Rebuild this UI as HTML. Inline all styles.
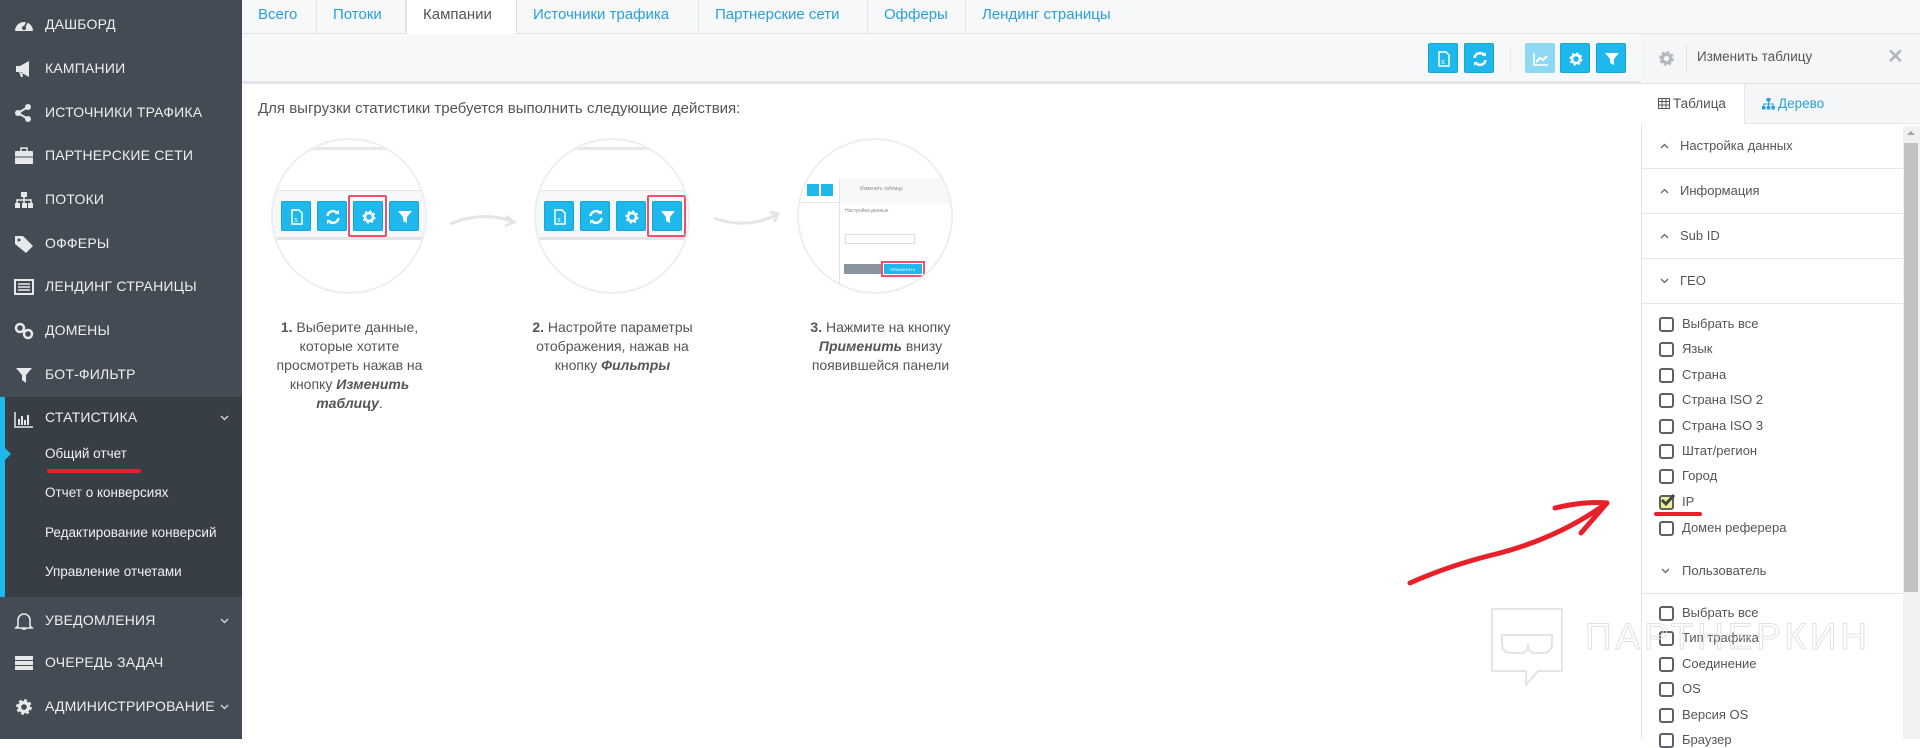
<!DOCTYPE html>
<html><head><meta charset="utf-8">
<style>
*{box-sizing:border-box;margin:0;padding:0}
body{width:1920px;height:739px;overflow:hidden;font-family:"Liberation Sans",sans-serif;background:#fff;position:relative;color:#555}
.abs{position:absolute}
#sb{left:0;top:0;width:242px;height:739px;background:#434b54}
.si{position:absolute;left:45px;color:#eef0f2;font-size:14px;text-transform:uppercase;letter-spacing:.2px}
.ic{position:absolute;left:14px;width:20px;height:18px}
.sub{position:absolute;left:45px;color:#f0f2f4;font-size:13.5px}
.chev{position:absolute;left:220px;width:9px;height:6px}
.tab{position:absolute;top:0;height:34px;line-height:30px;font-size:15px;color:#2b9fd8;padding:0 16px;border-right:1px solid #dfe2e6}
.btn{position:absolute;width:30px;height:30px;background:#1fb8ec;border-radius:2px;border:1px solid #14a6d8}
.btn svg{position:absolute;left:7px;top:7px;width:16px;height:16px}
.cb{position:absolute;left:1659px;width:15px;height:15px;border:2px solid #5b6168;border-radius:3px;background:#fff}
.cl{position:absolute;left:1682px;font-size:13px;color:#555}
.acc{position:absolute;left:1641px;width:262px;height:45px;border-bottom:1px solid #e3e5e8}
.acc span{position:absolute;left:39px;top:14px;font-size:13px;color:#555}
.acc svg{position:absolute;left:19px;top:19px}
.circ{position:absolute;width:156px;height:156px;border-radius:50%;border:2px solid #eceef0;background:#fff;overflow:hidden}
.step{position:absolute;font-size:14px;line-height:19px;color:#555;text-align:center}
</style></head><body>
<svg width="0" height="0" style="position:absolute">
<defs>
<symbol id="xls" viewBox="0 0 16 16"><path d="M3 1h7l3 3v11H3z" fill="none" stroke="#fff" stroke-width="1.5"/><text x="5" y="13" font-size="8" fill="#fff" font-family="Liberation Serif">x</text></symbol>
<symbol id="ref" viewBox="0 0 16 16"><path d="M2.5 7a5.5 5.5 0 0 1 10-2.5M13.5 9a5.5 5.5 0 0 1-10 2.5" fill="none" stroke="#fff" stroke-width="2.5"/><path d="M10 5h4V1zM6 11H2v4z" fill="#fff"/></symbol>
<symbol id="gear" viewBox="0 0 16 16"><circle cx="8" cy="8" r="5" fill="none" stroke="#fff" stroke-width="3" stroke-dasharray="2.2 1.7"/><circle cx="8" cy="8" r="4" fill="none" stroke="#fff" stroke-width="2.5"/></symbol>
<symbol id="fil" viewBox="0 0 16 16"><path d="M1 2h14L10 8v6l-4-2V8z" fill="#fff"/></symbol>
<symbol id="chart" viewBox="0 0 16 16"><path d="M1 2v12h14" fill="none" stroke="#fff" stroke-width="1.5"/><path d="M3 11l4-4 3 2 4-4" fill="none" stroke="#fff" stroke-width="2"/></symbol>
<symbol id="dn" viewBox="0 0 9 6"><path d="M1 1l3.5 3.5L8 1" fill="none" stroke="#cfd3d7" stroke-width="1.5"/></symbol>
<symbol id="up2" viewBox="0 0 9 6"><path d="M1 5l3.5-3.5L8 5" fill="none" stroke="#666" stroke-width="1.3"/></symbol>
<symbol id="dn2" viewBox="0 0 9 6"><path d="M1 1l3.5 3.5L8 1" fill="none" stroke="#666" stroke-width="1.3"/></symbol>
</defs></svg>

<!-- sidebar -->
<div id="sb" class="abs">
 <div class="abs" style="left:0;top:397px;width:242px;height:200px;background:#373e45"></div>
 <div class="abs" style="left:0;top:397px;width:5px;height:200px;background:#1fb8ec"></div>
 <div class="abs" style="left:5px;top:448px;width:0;height:0;border-top:6px solid transparent;border-bottom:6px solid transparent;border-left:6px solid #1fb8ec"></div>
 <svg class="ic" style="top:16px" viewBox="0 0 20 18"><path d="M1 15a9 9 0 1 1 18 0z" fill="#e6e8ea"/><circle cx="10" cy="12" r="2" fill="#434b54"/><path d="M10 12l3-6" stroke="#434b54" stroke-width="1.6"/></svg>
 <div class="si" style="top:16px">Дашборд</div>
 <svg class="ic" style="top:60px" viewBox="0 0 20 18"><path d="M2 6h4l9-5v16l-9-5H2z M5 12l2 5h2l-1-5" fill="#e6e8ea"/></svg>
 <div class="si" style="top:60px">Кампании</div>
 <svg class="ic" style="top:104px" viewBox="0 0 20 18"><circle cx="4" cy="9" r="3" fill="#e6e8ea"/><circle cx="14" cy="3" r="3" fill="#e6e8ea"/><circle cx="14" cy="15" r="3" fill="#e6e8ea"/><path d="M4 9l10-6M4 9l10 6" stroke="#e6e8ea" stroke-width="2"/></svg>
 <div class="si" style="top:104px">Источники трафика</div>
 <svg class="ic" style="top:147px" viewBox="0 0 20 18"><rect x="1" y="4" width="18" height="13" rx="1" fill="#e6e8ea"/><rect x="7" y="1" width="6" height="4" fill="none" stroke="#e6e8ea" stroke-width="1.5"/><path d="M1 10h18" stroke="#434b54"/></svg>
 <div class="si" style="top:147px">Партнерские сети</div>
 <svg class="ic" style="top:191px" viewBox="0 0 20 18"><rect x="7" y="1" width="6" height="5" fill="#e6e8ea"/><rect x="1" y="12" width="5" height="5" fill="#e6e8ea"/><rect x="8" y="12" width="5" height="5" fill="#e6e8ea"/><rect x="14" y="12" width="5" height="5" fill="#e6e8ea"/><path d="M10 6v6M3 12V9h14v3" fill="none" stroke="#e6e8ea" stroke-width="1.5"/></svg>
 <div class="si" style="top:191px">Потоки</div>
 <svg class="ic" style="top:235px" viewBox="0 0 20 18"><path d="M1 1h8l10 10-7 7L1 9z" fill="#e6e8ea"/><circle cx="5" cy="5" r="1.5" fill="#434b54"/></svg>
 <div class="si" style="top:235px">Офферы</div>
 <svg class="ic" style="top:278px" viewBox="0 0 20 18"><rect x="1" y="2" width="18" height="14" fill="none" stroke="#e6e8ea" stroke-width="2"/><path d="M4 6h12M4 9h12M4 12h12" stroke="#e6e8ea" stroke-width="1.5"/></svg>
 <div class="si" style="top:278px">Лендинг страницы</div>
 <svg class="ic" style="top:322px" viewBox="0 0 20 18"><circle cx="6" cy="6" r="4" fill="none" stroke="#e6e8ea" stroke-width="2.5"/><circle cx="14" cy="12" r="4" fill="none" stroke="#e6e8ea" stroke-width="2.5"/></svg>
 <div class="si" style="top:322px">Домены</div>
 <svg class="ic" style="top:366px" viewBox="0 0 20 18"><path d="M2 2h16l-6 7v8l-4-3V9z" fill="#e6e8ea"/></svg>
 <div class="si" style="top:366px">Бот-фильтр</div>
 <svg class="ic" style="top:410px" viewBox="0 0 20 18"><path d="M1 2v15h18" fill="none" stroke="#e6e8ea" stroke-width="1.5"/><path d="M5 9v6M8 6v9M11 10v5M14 5v10" stroke="#e6e8ea" stroke-width="2"/></svg>
 <div class="si" style="top:409px">Статистика</div><svg class="chev" style="top:415px"><use href="#dn"/></svg>
 <div class="sub" style="top:446px">Общий отчет</div>
 <div class="abs" style="left:47px;top:469px;width:94px;height:4px;background:#e8202a;border-radius:2px"></div>
 <div class="sub" style="top:485px">Отчет о конверсиях</div>
 <div class="sub" style="top:525px">Редактирование конверсий</div>
 <div class="sub" style="top:564px">Управление отчетами</div>
 <svg class="ic" style="top:612px" viewBox="0 0 20 18"><path d="M4 14V8a6 6 0 0 1 12 0v6l2 2H2z" fill="none" stroke="#e6e8ea" stroke-width="1.6"/><path d="M8 17h4" stroke="#e6e8ea" stroke-width="1.6"/></svg>
 <div class="si" style="top:612px">Уведомления</div><svg class="chev" style="top:618px"><use href="#dn"/></svg>
 <svg class="ic" style="top:654px" viewBox="0 0 20 18"><rect x="1" y="2" width="18" height="4" fill="#e6e8ea"/><rect x="1" y="7" width="18" height="4" fill="#e6e8ea"/><rect x="1" y="12" width="18" height="4" fill="#e6e8ea"/></svg>
 <div class="si" style="top:654px">Очередь задач</div>
 <svg class="ic" style="top:698px" viewBox="0 0 16 16"><circle cx="8" cy="8" r="5.5" fill="none" stroke="#e6e8ea" stroke-width="3" stroke-dasharray="2.4 1.9"/><circle cx="8" cy="8" r="4" fill="none" stroke="#e6e8ea" stroke-width="3"/></svg>
 <div class="si" style="top:698px">Администрирование</div><svg class="chev" style="top:704px"><use href="#dn"/></svg>
</div>

<!-- tabs -->
<div class="abs" style="left:242px;top:0;width:1678px;height:34px;background:#f7f8fa;border-bottom:1px solid #dfe2e6"></div>
<div class="tab" style="left:242px;width:75px">Всего</div>
<div class="tab" style="left:317px;width:89px">Потоки</div>
<div class="tab" style="left:406px;width:111px;background:#fff;color:#555;height:35px;border-left:1px solid #dfe2e6">Кампании</div>
<div class="tab" style="left:517px;width:182px">Источники трафика</div>
<div class="tab" style="left:699px;width:169px">Партнерские сети</div>
<div class="tab" style="left:868px;width:98px">Офферы</div>
<div class="tab" style="left:966px;border-right:none">Лендинг страницы</div>

<!-- toolbar -->
<div class="abs" style="left:242px;top:34px;width:1399px;height:50px;background:#f7f8fa;border-bottom:3px solid #e3e5e8"></div>
<div class="btn" style="left:1428px;top:43px"><svg><use href="#xls"/></svg></div>
<div class="btn" style="left:1464px;top:43px"><svg><use href="#ref"/></svg></div>
<div class="abs" style="left:1510px;top:46px;width:1px;height:26px;background:#e3e5e8"></div>
<div class="btn" style="left:1525px;top:43px;background:#8fd8f2;border-color:#8fd8f2"><svg><use href="#chart"/></svg></div>
<div class="btn" style="left:1560px;top:43px"><svg><use href="#gear"/></svg></div>
<div class="btn" style="left:1596px;top:43px"><svg><use href="#fil"/></svg></div>

<!-- content -->
<div class="abs" style="left:258px;top:100px;font-size:15px;color:#555">Для выгрузки статистики требуется выполнить следующие действия:</div>

<div class="circ" style="left:271px;top:138px">
 <div class="abs" style="left:0;top:7px;width:160px;height:3px;background:#e6e8ea"></div>
 <div class="abs" style="left:0;top:50px;width:160px;height:50px;background:#f7f8fa;border-top:1px solid #e3e5e8;border-bottom:3px solid #e3e5e8"></div>
 <div class="btn" style="left:8px;top:61px"><svg><use href="#xls"/></svg></div>
 <div class="btn" style="left:44px;top:61px"><svg><use href="#ref"/></svg></div>
 <div class="btn" style="left:80px;top:61px"><svg><use href="#gear"/></svg></div>
 <div class="abs" style="left:75px;top:55px;width:39px;height:42px;border:2px solid #f0506e;border-radius:2px"></div>
 <div class="btn" style="left:116px;top:61px"><svg><use href="#fil"/></svg></div>
</div>
<svg class="abs" style="left:448px;top:208px" width="72" height="22"><path d="M2 16Q35 2 66 14M58 8l8 6-9 4" fill="none" stroke="#e3e6e9" stroke-width="3"/></svg>
<div class="circ" style="left:534px;top:138px">
 <div class="abs" style="left:0;top:7px;width:160px;height:3px;background:#e6e8ea"></div>
 <div class="abs" style="left:0;top:50px;width:160px;height:50px;background:#f7f8fa;border-top:1px solid #e3e5e8;border-bottom:3px solid #e3e5e8"></div>
 <div class="btn" style="left:8px;top:61px"><svg><use href="#xls"/></svg></div>
 <div class="btn" style="left:44px;top:61px"><svg><use href="#ref"/></svg></div>
 <div class="btn" style="left:80px;top:61px"><svg><use href="#gear"/></svg></div>
 <div class="btn" style="left:116px;top:61px"><svg><use href="#fil"/></svg></div>
 <div class="abs" style="left:111px;top:55px;width:39px;height:42px;border:2px solid #f0506e;border-radius:2px"></div>
</div>
<svg class="abs" style="left:712px;top:208px" width="72" height="22"><path d="M2 10Q35 22 66 6M58 4l8 2-4 8" fill="none" stroke="#e3e6e9" stroke-width="3"/></svg>
<div class="circ" style="left:797px;top:138px">
 <div class="abs" style="left:8px;top:44px;width:12px;height:12px;background:#1fb8ec"></div>
 <div class="abs" style="left:22px;top:44px;width:12px;height:12px;background:#1fb8ec"></div>
 <div class="abs" style="left:0;top:62px;width:40px;height:1px;background:#e3e5e8"></div>
 <div class="abs" style="left:40px;top:38px;width:1px;height:120px;background:#e3e5e8"></div>
 <div class="abs" style="left:41px;top:38px;width:115px;height:26px;background:#f7f8fa;font-size:5px;color:#888;padding:8px 0 0 20px">Изменить таблицу</div>
 <div class="abs" style="left:46px;top:68px;font-size:5px;color:#888">Настройка данных</div>
 <div class="abs" style="left:46px;top:94px;width:70px;height:10px;border:1px solid #ddd"></div>
 <div class="abs" style="left:45px;top:124px;width:37px;height:10px;background:#8a949c"></div>
 <div class="abs" style="left:85px;top:124px;width:38px;height:10px;background:#1fb8ec;font-size:4px;color:#fff;padding:3px 0 0 6px">ПРИМЕНИТЬ</div>
 <div class="abs" style="left:82px;top:121px;width:44px;height:16px;border:2px solid #f0506e"></div>
</div>

<div class="step" style="left:262px;top:318px;width:175px"><b>1.</b> Выберите данные, которые хотите просмотреть нажав на кнопку <b><i>Изменить таблицу</i></b>.</div>
<div class="step" style="left:520px;top:318px;width:185px"><b>2.</b> Настройте параметры отображения, нажав на кнопку <b><i>Фильтры</i></b></div>
<div class="step" style="left:793px;top:318px;width:175px"><b>3.</b> Нажмите на кнопку <b><i>Применить</i></b> внизу появившейся панели</div>

<!-- right panel -->
<div class="abs" style="left:1641px;top:34px;width:279px;height:705px;background:#fff;border-left:1px solid #dfe2e6"></div>
<div class="abs" style="left:1641px;top:34px;width:279px;height:89px;background:#f5f6f8"></div>
<div class="abs" style="left:1641px;top:83px;width:279px;height:1px;background:#e3e5e8"></div>
<svg class="abs" style="left:1658px;top:50px" width="17" height="17" viewBox="0 0 16 16"><circle cx="8" cy="8" r="5.5" fill="none" stroke="#b5b9bd" stroke-width="3" stroke-dasharray="2.4 1.9"/><circle cx="8" cy="8" r="4" fill="none" stroke="#b5b9bd" stroke-width="3"/></svg>
<div class="abs" style="left:1686px;top:45px;width:1px;height:27px;background:#e0e2e5"></div>
<div class="abs" style="left:1697px;top:49px;font-size:13.5px;color:#555">Изменить таблицу</div>
<div class="abs" style="left:1887px;top:44px;font-size:20px;color:#b5b9bd;font-weight:bold">✕</div>
<div class="abs" style="left:1641px;top:84px;width:104px;height:40px;background:#fff;border-right:1px solid #e3e5e8"></div>
<div class="abs" style="left:1745px;top:123px;width:175px;height:1px;background:#e3e5e8"></div>
<svg class="abs" style="left:1658px;top:98px" width="12" height="11"><rect x=".5" y=".5" width="11" height="10" fill="none" stroke="#555"/><path d="M.5 3.5h11M.5 7h11M4 .5v10M8 .5v10" stroke="#555"/></svg>
<div class="abs" style="left:1673px;top:96px;font-size:13.5px;color:#555">Таблица</div>
<svg class="abs" style="left:1762px;top:98px" width="13" height="12"><rect x="4.5" y="0" width="4" height="3.5" fill="#2b9fd8"/><rect x="0" y="8" width="3.5" height="3.5" fill="#2b9fd8"/><rect x="4.7" y="8" width="3.5" height="3.5" fill="#2b9fd8"/><rect x="9.4" y="8" width="3.5" height="3.5" fill="#2b9fd8"/><path d="M6.5 3v5M1.7 8V6h9.5v2" fill="none" stroke="#2b9fd8"/></svg>
<div class="abs" style="left:1778px;top:96px;font-size:13.5px;color:#2b9fd8">Дерево</div>

<div class="abs" style="left:1903px;top:126px;width:17px;height:613px;background:#f1f1f1"></div>
<div class="abs" style="left:1904px;top:143px;width:14px;height:449px;background:#c1c1c1"></div>
<div class="abs" style="left:1907px;top:131px;width:0;height:0;border-left:4px solid transparent;border-right:4px solid transparent;border-bottom:4px solid #a3a3a3"></div>

<div class="acc" style="top:124px"><svg width="9" height="6"><use href="#up2"/></svg><span>Настройка данных</span></div>
<div class="acc" style="top:169px"><svg width="9" height="6"><use href="#up2"/></svg><span>Информация</span></div>
<div class="acc" style="top:214px"><svg width="9" height="6"><use href="#up2"/></svg><span>Sub ID</span></div>
<div class="acc" style="top:259px"><svg width="9" height="6"><use href="#dn2"/></svg><span>ГЕО</span></div>

<div class="cb" style="top:317px"></div><div class="cl" style="top:316px">Выбрать все</div>
<div class="cb" style="top:342px"></div><div class="cl" style="top:341px">Язык</div>
<div class="cb" style="top:368px"></div><div class="cl" style="top:367px">Страна</div>
<div class="cb" style="top:393px"></div><div class="cl" style="top:392px">Страна ISO 2</div>
<div class="cb" style="top:419px"></div><div class="cl" style="top:418px">Страна ISO 3</div>
<div class="cb" style="top:444px"></div><div class="cl" style="top:443px">Штат/регион</div>
<div class="cb" style="top:469px"></div><div class="cl" style="top:468px">Город</div>
<div class="cb" style="top:495px;background:#f4f08a"></div><div class="cl" style="top:494px">IP</div>
<svg class="abs" style="left:1660px;top:493px" width="16" height="14"><path d="M2 7l4 4 8-9" fill="none" stroke="#3e454c" stroke-width="3"/></svg>
<div class="abs" style="left:1654px;top:512px;width:48px;height:4px;background:#e8202a;border-radius:2px"></div>
<div class="cb" style="top:521px"></div><div class="cl" style="top:520px">Домен реферера</div>
<div class="abs" style="left:1641px;top:593px;width:262px;height:1px;background:#e3e5e8"></div>
<svg class="abs" style="left:1661px;top:568px" width="9" height="6"><use href="#dn2"/></svg>
<div class="cl" style="top:563px">Пользователь</div>
<div class="cb" style="top:606px"></div><div class="cl" style="top:605px">Выбрать все</div>
<div class="cb" style="top:631px"></div><div class="cl" style="top:630px">Тип трафика</div>
<div class="cb" style="top:657px"></div><div class="cl" style="top:656px">Соединение</div>
<div class="cb" style="top:682px"></div><div class="cl" style="top:681px">OS</div>
<div class="cb" style="top:708px"></div><div class="cl" style="top:707px">Версия OS</div>
<div class="cb" style="top:733px"></div><div class="cl" style="top:732px">Браузер</div>

<!-- watermark -->
<svg class="abs" style="left:1488px;top:605px" width="400" height="84">
<path d="M4 4h70v62H50l-12 14V66H4z" fill="none" stroke="#e4e4e4" stroke-width="2" stroke-linejoin="round"/>
<path d="M14 30h50v8q0 10-10 10h-6q-8 0-8-8q0 8-8 8h-8q-10 0-10-10z" fill="none" stroke="#e4e4e4" stroke-width="2"/>
<text x="97" y="44" font-family="Liberation Sans" font-size="37" fill="none" stroke="#e2e2e2" stroke-width="1" textLength="282" lengthAdjust="spacing">ПАРТНЕРКИН</text>
</svg>

<!-- red arrow -->
<svg class="abs" style="left:1400px;top:495px" width="220" height="110">
<path d="M10 88Q50 70 100 58Q160 42 207 8" fill="none" stroke="#e8202a" stroke-width="5" stroke-linecap="round"/>
<path d="M155 13Q185 6 207 8L181 38" fill="none" stroke="#e8202a" stroke-width="5" stroke-linecap="round" stroke-linejoin="round"/>
</svg>
</body></html>
